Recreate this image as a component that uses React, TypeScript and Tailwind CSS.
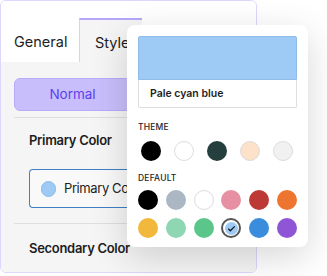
import React from 'react';

const themeColors = [
  { name: 'Black', value: '#000000', ring: false },
  { name: 'White', value: '#ffffff', ring: true },
  { name: 'Dark teal', value: '#243f3e', ring: false },
  { name: 'Peach', value: '#fbe2c9', ring: true },
  { name: 'Light gray', value: '#f1f1f1', ring: true },
];

const defaultColors = [
  { name: 'Black', value: '#000000', ring: false },
  { name: 'Cyan bluish gray', value: '#abb8c3', ring: false },
  { name: 'White', value: '#ffffff', ring: true },
  { name: 'Pale pink', value: '#e890a3', ring: false },
  { name: 'Vivid red', value: '#bd3936', ring: false },
  { name: 'Luminous vivid orange', value: '#ee7530', ring: false },
  { name: 'Luminous vivid amber', value: '#f2b83c', ring: false },
  { name: 'Light green cyan', value: '#8fd7b2', ring: false },
  { name: 'Vivid green cyan', value: '#5bc68a', ring: false },
  { name: 'Pale cyan blue', value: '#9ecbf5', ring: false, selected: true },
  { name: 'Vivid cyan blue', value: '#3a8cdc', ring: false },
  { name: 'Vivid purple', value: '#8e55d6', ring: false },
];

const Swatch: React.FC<{ value: string; ring?: boolean; selected?: boolean }> = ({ value, ring, selected }) => {
  if (selected) {
    return (
      <div className="w-5 h-5 rounded-full border-2 border-[#555] flex items-center justify-center">
        <div className="w-[13px] h-[13px] rounded-full flex items-center justify-center" style={{ backgroundColor: value }}>
          <svg viewBox="0 0 24 24" className="w-[11px] h-[11px]" fill="none" stroke="#111" strokeWidth="2.6">
            <path d="M5 12.5l4.5 4.5L19 7.5" />
          </svg>
        </div>
      </div>
    );
  }
  return (
    <div
      className={`w-5 h-5 rounded-full ${ring ? 'border border-[#dcdcdc]' : ''}`}
      style={{ backgroundColor: value }}
    />
  );
};

export default function App() {
  return (
    <div className="relative w-[327px] h-[276px] bg-white overflow-hidden font-['Inter',sans-serif] text-[#1e1e1e]">
      {/* Settings panel */}
      <div className="w-[257px] h-[273px] border border-[#ddd6fe] rounded-md overflow-hidden flex flex-col">
        <div className="h-[61px] bg-white flex items-end shrink-0">
          <div className="w-[78px] h-[44px] pl-[13px] pt-[3px] flex items-center text-[14.5px]">General</div>
          <div className="w-[63px] h-[44px] pl-[15px] pt-[3px] flex items-center text-[14.5px] bg-[#f5f5f5] border-l border-[#d9cffc] border-t-2 border-t-[#b7a6fa]">
            Style
          </div>
        </div>
        <div className="flex-1 bg-[#f5f5f5] px-[13px] pt-4">
          <div className="w-[117px] h-[33px] rounded-md bg-[#c8befb] border border-[#b9abf8] flex items-center justify-center text-[13.5px] text-[#5b3ef0]">
            Normal
          </div>
          <div className="mt-[6px] border-t border-[#dedede]" />
          <div className="pl-[15px] mt-[12px] text-[13px] font-semibold leading-5 tracking-[-0.3px]">Primary Color</div>
          <div className="ml-[15px] mt-[19px] h-[39px] w-[99px] border border-r-0 border-[#3f7fc4] rounded-l bg-[#f9f9f9] flex items-center pl-[11px] gap-[8px]">
            <div className="w-[15px] h-[16px] shrink-0 rounded-full bg-[#9ecbf5] border border-[#8cbbe6]" />
            <span className="text-[13px] whitespace-nowrap tracking-[-0.4px]">Primary Co</span>
          </div>
          <div className="mt-[15px] border-t border-[#dedede]" />
          <div className="pl-[15px] mt-[14px] text-[13px] font-semibold leading-5 tracking-[-0.3px] whitespace-nowrap">Secondary Color</div>
        </div>
      </div>

      {/* Color popover */}
      <div className="absolute left-[127px] top-[25px] w-[181px] h-[222px] bg-white rounded-lg shadow-[0_10px_36px_rgba(0,0,0,0.16)] p-[11px]">
        <div className="h-[44px] bg-[#9ecbf5] border border-[#8fbde8] rounded-t-[2px]" />
        <div className="h-[28px] border border-t-0 border-[#dedede] rounded-b-[2px] flex items-center pl-[11px] text-[10.5px] font-semibold">
          Pale cyan blue
        </div>
        <div className="mt-[14px] text-[8.5px] font-medium tracking-[0.2px] leading-[10px]">THEME</div>
        <div className="mt-[9px] flex gap-[13px] pl-[3px]">
          {themeColors.map((c) => (
            <Swatch key={c.name} value={c.value} ring={c.ring} />
          ))}
        </div>
        <div className="mt-[12px] text-[8.5px] font-medium tracking-[0.2px] leading-[10px]">DEFAULT</div>
        <div className="mt-[7px] grid grid-cols-6 gap-y-[8px] justify-items-start gap-x-[7.8px]">
          {defaultColors.map((c) => (
            <Swatch key={c.name} value={c.value} ring={c.ring} selected={c.selected} />
          ))}
        </div>
      </div>
    </div>
  );
}
